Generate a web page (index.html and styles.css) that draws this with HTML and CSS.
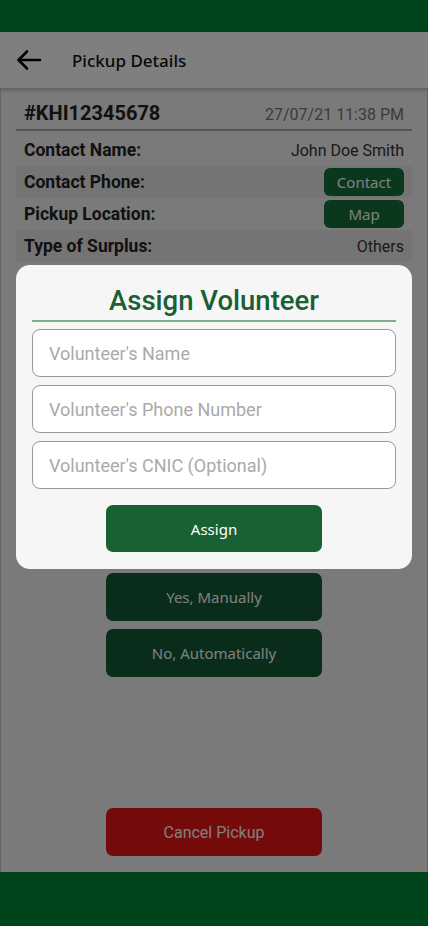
FILE: index.html
```html
<!DOCTYPE html>
<html>
<head>
<meta charset="utf-8">
<link rel="stylesheet" href="styles.css">
</head>
<body>
<div class="status"></div>
<div class="app">
  <header class="topbar">
    <svg class="back" width="26" height="22" viewBox="0 0 26 22"><path d="M24 11H3M11 2.5L2.5 11L11 19.5" fill="none" stroke="#000" stroke-width="2.6" stroke-linecap="round" stroke-linejoin="round"/></svg>
    <span class="title">Pickup Details</span>
  </header>
  <main class="content">
    <div class="idrow">
      <span class="pid">#KHI12345678</span>
      <span class="date">27/07/21 11:38 PM</span>
    </div>
    <div class="row first"><span class="label">Contact Name:</span><span class="value">John Doe Smith</span></div>
    <div class="row striped"><span class="label">Contact Phone:</span><button class="small">Contact</button></div>
    <div class="row"><span class="label">Pickup Location:</span><button class="small">Map</button></div>
    <div class="row striped"><span class="label">Type of Surplus:</span><span class="value">Others</span></div>
    <div class="actions">
      <button class="big">Yes, Manually</button>
      <button class="big">No, Automatically</button>
    </div>
    <div class="spacer"></div>
    <button class="big cancel">Cancel Pickup</button>
  </main>
  <div class="overlay">
    <div class="modal">
      <h2 class="mtitle">Assign Volunteer</h2>
      <div class="field">Volunteer's Name</div>
      <div class="field">Volunteer's Phone Number</div>
      <div class="field">Volunteer's CNIC (Optional)</div>
      <button class="big assign">Assign</button>
    </div>
  </div>
</div>
<div class="navbar"></div>
</body>
</html>
```
FILE: styles.css
```css
* { box-sizing: border-box; }
html, body { margin: 0; padding: 0; }
body { width: 428px; height: 926px; overflow: hidden; font-family: Roboto, "Noto Sans", sans-serif; background: #f4f4f4; }
.status { height: 32px; background: #00441b; }
.navbar { height: 54px; background: #00441b; }
.app { position: relative; height: 840px; display: flex; flex-direction: column; background: #f4f4f4; box-shadow: inset 1px 0 0 #c8c8c8, inset -1px 0 0 #c8c8c8; }
.topbar { height: 56px; background: #fff; display: flex; align-items: center; padding-left: 16px; box-shadow: 0 2px 4px rgba(0,0,0,0.25); position: relative; z-index: 1; }
.back { display: block; }
.title { margin-left: 30px; font-family: "Noto Sans", sans-serif; font-weight: 500; font-size: 17px; color: #111; }
.content { flex: 1; display: flex; flex-direction: column; padding: 13px 16px 16px; }
.idrow { display: flex; justify-content: space-between; align-items: center; padding: 0 8px 4px; border-bottom: 2px solid #aaa; height: 30px; }
.pid { font-weight: 700; font-size: 20px; color: #222; }
.date { font-size: 16px; color: #777; padding-top: 3px; }
.row { height: 32px; display: flex; justify-content: space-between; align-items: center; padding: 0 8px; }
.first { margin-top: 3px; }
.striped { background: #e8e8e8; }
.label { font-weight: 700; font-size: 17.5px; color: #222; }
.value { font-size: 16px; color: #333; }
button { border: 0; cursor: pointer; font-family: "Noto Sans", sans-serif; color: #fff; }
.small { background: #15703b; border-radius: 6px; width: 80px; height: 28px; font-size: 15px; padding: 0; }
.actions { display: flex; flex-direction: column; align-items: center; gap: 8px; margin-top: 311px; }
.big { width: 216px; height: 48px; border-radius: 7px; background: #145a37; font-size: 15px; }
.spacer { flex: 1; }
.cancel { align-self: center; background: #ea1414; font-family: Roboto, sans-serif; font-size: 16px; }
.overlay { position: absolute; inset: 0; background: rgba(0,0,0,0.5); z-index: 2; }
.modal { position: absolute; left: 16px; top: 233px; width: 396px; background: #f6f6f6; border-radius: 14px; padding: 20px 16px 17px; display: flex; flex-direction: column; align-items: center; }
.mtitle { margin: 0; width: 100%; text-align: center; font-weight: 500; font-size: 27.5px; color: #1a6034; line-height: 32px; padding-bottom: 3px; border-bottom: 2px solid #7fac8a; margin-bottom: 7px; }
.field { width: 100%; height: 48px; background: #fff; border: 1px solid #999; border-radius: 8px; padding-left: 16px; display: flex; align-items: center; font-size: 18px; color: #aaa; margin-bottom: 8px; }
.assign { margin-top: 8px; height: 47px; background: #196133; }
```
